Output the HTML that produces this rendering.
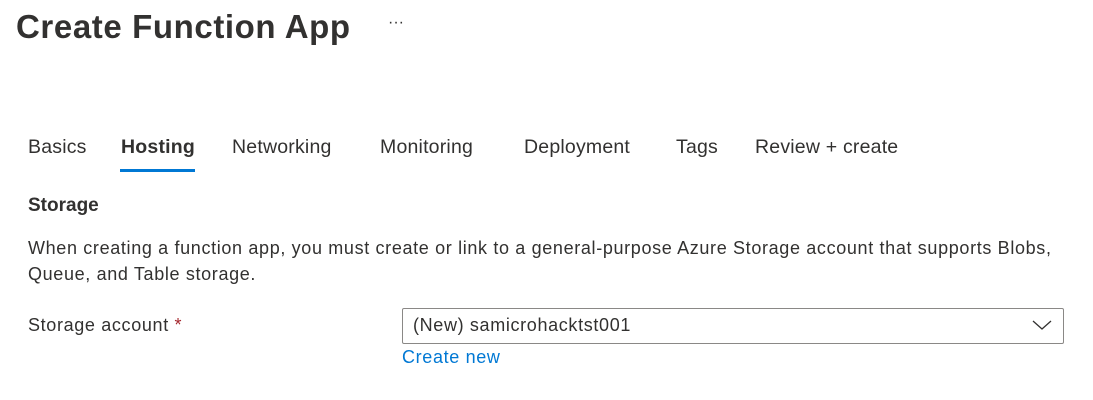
<!DOCTYPE html>
<html><head><style>
body{margin:0;width:1093px;height:400px;background:#fff;font-family:"Liberation Sans",sans-serif;color:#323130;position:relative;overflow:hidden}
.a{position:absolute;white-space:nowrap}
.t{font-size:19.5px;top:136px;letter-spacing:0.2px}
.b{font-size:18px;letter-spacing:0.65px}
</style></head><body>
<div class="a" style="left:16px;top:8px;font-size:33px;font-weight:bold;letter-spacing:0.6px;color:#323130">Create Function App</div>
<div class="a" style="left:388px;top:14px;font-size:16px">···</div>
<div class="a t" style="left:28px">Basics</div>
<div class="a t" style="left:121px;font-weight:bold">Hosting</div>
<div style="position:absolute;left:120px;top:169px;width:75px;height:3px;background:#0078d4"></div>
<div class="a t" style="left:232px">Networking</div>
<div class="a t" style="left:380px">Monitoring</div>
<div class="a t" style="left:524px">Deployment</div>
<div class="a t" style="left:676px">Tags</div>
<div class="a t" style="left:755px">Review + create</div>
<div class="a" style="left:28px;top:195px;font-size:19px;font-weight:bold">Storage</div>
<div class="a b" style="left:28px;top:235px;line-height:26px">When creating a function app, you must create or link to a general-purpose Azure Storage account that supports Blobs,<br>Queue, and Table storage.</div>
<div class="a b" style="left:28px;top:315px">Storage account <span style="color:#a4262c">*</span></div>
<div style="position:absolute;left:402px;top:308px;width:660px;height:34px;border:1px solid #8a8886;border-radius:2px"></div>
<div class="a b" style="left:413px;top:315px">(New) samicrohacktst001</div>
<svg style="position:absolute;left:1032px;top:318px" width="20" height="14"><path d="M1 3 L10 11 L19 3" fill="none" stroke="#323130" stroke-width="1.3"/></svg>
<div class="a b" style="left:402px;top:347px;color:#0078d4">Create new</div>
</body></html>
